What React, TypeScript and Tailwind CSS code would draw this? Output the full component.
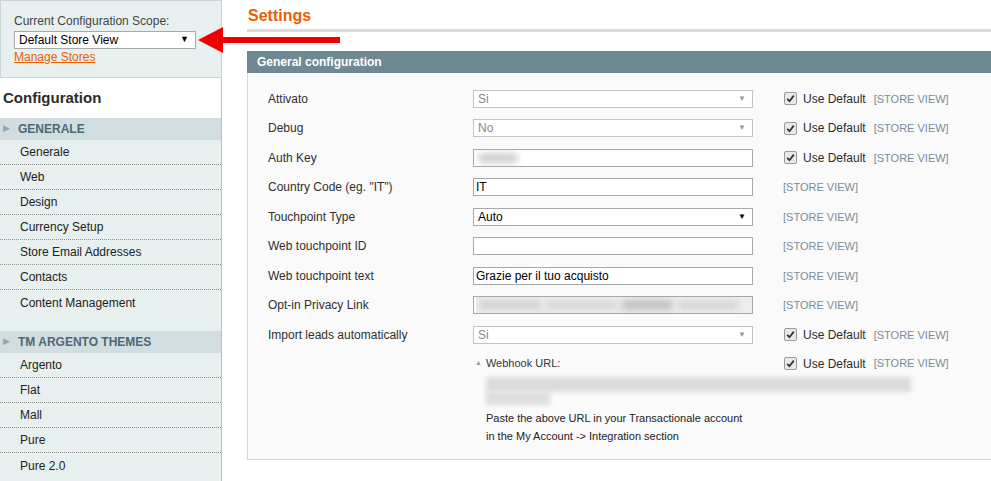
import React from 'react';

const generale = ['Generale', 'Web', 'Design', 'Currency Setup', 'Store Email Addresses', 'Contacts', 'Content Management'];
const themes = ['Argento', 'Flat', 'Mall', 'Pure', 'Pure 2.0'];

const Check = () => (
  <span className="flex h-[13px] w-[13px] items-center justify-center rounded-[2px] border border-[#9a9a9a] bg-[#e9e9e9]">
    <svg width="9" height="9" viewBox="0 0 9 9">
      <path d="M1.2 4.8 L3.5 7.2 L7.8 1.6" fill="none" stroke="#333" strokeWidth="1.8" />
    </svg>
  </span>
);

const Scope = ({ useDefault }: { useDefault?: boolean }) =>
  useDefault ? (
    <div className="ml-[31px] flex items-center">
      <Check />
      <span className="ml-[6px] text-[12px] text-[#2b2b2b]">Use Default</span>
      <span className="ml-[8px] text-[11px] text-[#7b8c99]">[STORE VIEW]</span>
    </div>
  ) : (
    <div className="ml-[30px] text-[11px] text-[#7b8c99]">[STORE VIEW]</div>
  );

const SelectBox = ({ value, disabled }: { value: string; disabled?: boolean }) => (
  <div
    className={`flex h-[18px] w-[280px] items-center justify-between border bg-white pl-[4px] pr-[6px] text-[12px] ${
      disabled ? 'border-[#c4c4c4] text-[#8a8a8a]' : 'border-[#a8a8a8] text-black'
    }`}
  >
    <span>{value}</span>
    <span className={`text-[8px] ${disabled ? 'text-[#999]' : 'text-black'}`}>▼</span>
  </div>
);

const TextBox = ({ value, blur, wide }: { value?: string; blur?: boolean; wide?: boolean }) => (
  <div className="flex h-[18px] w-[280px] items-center overflow-hidden border border-[#a8a8a8] bg-white pl-[2px] text-[12px] text-black">
    {value}
    {blur && !wide && <div className="ml-[2px] h-[10px] w-[40px] rounded-full bg-[#cfcfcf] blur-[3px]" />}
    {blur && wide && (
      <div className="flex h-[16px] w-full items-center gap-[6px] bg-[#ececec] px-[4px]">
        <div className="h-[8px] w-[60px] bg-[#cfcfcf] blur-[3px]" />
        <div className="h-[8px] w-[70px] bg-[#d6d6d6] blur-[3px]" />
        <div className="h-[10px] w-[50px] bg-[#c2c2c2] blur-[3px]" />
        <div className="h-[8px] w-[60px] bg-[#d4d4d4] blur-[3px]" />
      </div>
    )}
  </div>
);

const Row = ({ label, children }: { label: string; children: React.ReactNode }) => (
  <div className="flex h-[29.5px] items-center">
    <div className="w-[205px] shrink-0 text-[12px] text-[#2f2f2f]">{label}</div>
    {children}
  </div>
);

const NavSection = ({ title, items }: { title: string; items: string[] }) => (
  <div>
    <div className="flex h-[22px] items-center bg-[#d1dee1]">
      <span className="ml-[3px] text-[9px] text-[#93a5ab]">▶</span>
      <span className="ml-[8px] text-[12px] font-bold text-[#4c6875]">{title}</span>
    </div>
    {items.map((item, i) => (
      <div
        key={item}
        className={`flex h-[25px] items-center pl-[20px] text-[12px] text-[#222] ${
          i < items.length - 1 ? 'border-b border-dotted border-[#8a8a8a]' : ''
        }`}
      >
        {item}
      </div>
    ))}
  </div>
);

export default function App() {
  return (
    <div className="relative flex h-[481px] w-[991px] overflow-hidden bg-white font-['Liberation_Sans',Arial,sans-serif]">
      {/* Sidebar */}
      <aside className="flex w-[222px] shrink-0 flex-col">
        <div className="h-[78px] border border-[#c9d5d5] bg-[#e7efef] pl-[13px] pt-[13px]">
          <div className="text-[12px] leading-[14px] text-[#444]">Current Configuration Scope:</div>
          <div className="mt-[3px] flex h-[18px] w-[182px] items-center justify-between border border-[#a9a9a9] bg-white pl-[4px] pr-[6px] text-[12px] text-black">
            <span>Default Store View</span>
            <span className="text-[9px]">▼</span>
          </div>
          <div className="text-[12px] leading-[16px] text-[#eb5e00] underline">Manage Stores</div>
        </div>
        <div className="flex h-[40px] items-center border-r border-[#b8c3c3] pl-[3px] text-[15px] font-bold text-[#2b2b2b]">
          Configuration
        </div>
        <nav className="flex-1 border-r border-[#b8c3c3] bg-[#e7efef]">
          <NavSection title="GENERALE" items={generale} />
          <div className="h-[16px]" />
          <NavSection title="TM ARGENTO THEMES" items={themes} />
        </nav>
      </aside>

      {/* Main */}
      <main className="min-w-0 flex-1 pl-[25px]">
        <h2 className="pl-[1px] pt-[7px] text-[16px] font-bold leading-[18px] text-[#eb5e00]">Settings</h2>
        <div className="mt-[4px] h-[3px] bg-[#dadada]" />

        <section className="mt-[19px] w-[800px]">
          <div className="flex h-[22px] items-center bg-[#6f8992] pl-[10px] text-[12px] font-bold text-white">
            General configuration
          </div>
          <div className="h-[387px] border border-t-0 border-[#d6d6d6] bg-[#fafafa] pl-[20px] pt-[11px]">
            <Row label="Attivato">
              <SelectBox value="Si" disabled />
              <Scope useDefault />
            </Row>
            <Row label="Debug">
              <SelectBox value="No" disabled />
              <Scope useDefault />
            </Row>
            <Row label="Auth Key">
              <TextBox blur />
              <Scope useDefault />
            </Row>
            <Row label={'Country Code (eg. "IT")'}>
              <TextBox value="IT" />
              <Scope />
            </Row>
            <Row label="Touchpoint Type">
              <SelectBox value="Auto" />
              <Scope />
            </Row>
            <Row label="Web touchpoint ID">
              <TextBox />
              <Scope />
            </Row>
            <Row label="Web touchpoint text">
              <TextBox value="Grazie per il tuo acquisto" />
              <Scope />
            </Row>
            <Row label="Opt-in Privacy Link">
              <TextBox blur wide />
              <Scope />
            </Row>
            <Row label="Import leads automatically">
              <SelectBox value="Si" disabled />
              <Scope useDefault />
            </Row>

            <div className="flex pl-[205px] pt-[6px]">
              <div className="w-[280px] shrink-0">
                <div className="flex h-[16px] items-center text-[11px] text-[#333]">
                  <span className="ml-[2px] text-[7px] text-[#999]">▲</span>
                  <span className="ml-[4px]">Webhook URL:</span>
                </div>
                <div className="ml-[13px] mt-[5px] w-[425px]">
                  <div className="h-[15px] bg-[#dcdcdc] blur-[2px]" />
                  <div className="h-[13px] w-[64px] bg-[#dedede] blur-[2px]" />
                </div>
                <div className="ml-[13px] mt-[4px] whitespace-nowrap text-[11px] leading-[18px] text-[#222]">
                  <div>Paste the above URL in your Transactionale account</div>
                  <div>in the My Account -&gt; Integration section</div>
                </div>
              </div>
              <div className="flex h-[16px] items-center">
                <Scope useDefault />
              </div>
            </div>
          </div>
        </section>
      </main>

      {/* Red annotation arrow */}
      <svg className="pointer-events-none absolute left-[190px] top-[22px]" width="160" height="36" viewBox="0 0 160 36">
        <polygon points="8,18 33,5 33,31" fill="#f00000" />
        <rect x="31" y="15" width="119" height="6" fill="#f00000" />
      </svg>
    </div>
  );
}
